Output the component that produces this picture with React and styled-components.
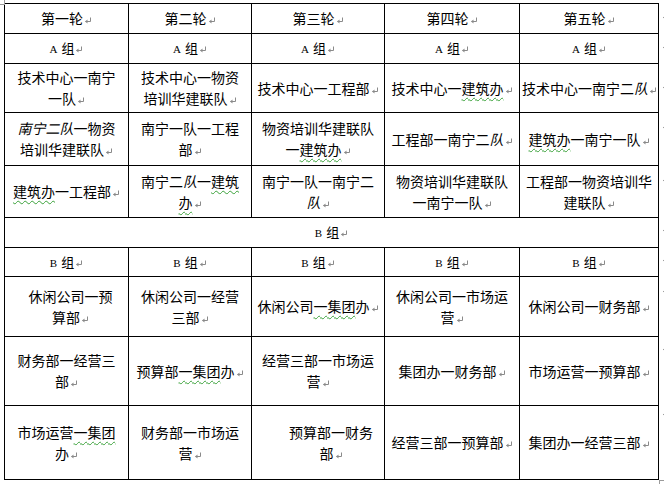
import React from "react";
import styled, { createGlobalStyle } from "styled-components";

const Global = createGlobalStyle`
  html, body { margin: 0; padding: 0; background: #fff; overflow: hidden; }
  body { font-family: "Noto Sans CJK SC", "Noto Sans", sans-serif; color: #000; }
`;

const Page = styled.div`
  position: relative;
  width: 664px;
  height: 484px;
  padding: 3px 0 0 4px;
  box-sizing: border-box;
`;

const Table = styled.table`
  border-collapse: collapse;
  table-layout: fixed;
  width: 660px;
`;

const Row = styled.tr`
  height: ${(p) => p.$h}px;
`;

const Cell = styled.td`
  border: 1px solid #000;
  padding: 0 2px 0 ${(p) => 2 + (p.$shift || 0)}px;
  text-align: center;
  vertical-align: middle;
  font-size: ${(p) => (p.$small ? 13 : 14)}px;
  line-height: ${(p) => (p.$small ? 18 : 21)}px;
  white-space: nowrap;
  overflow: hidden;
`;

const EdgeCell = styled.td`
  border: none;
  padding: ${(p) => p.$top}px 0 0 2px;
  vertical-align: top;
  line-height: 0;
`;

const Line = styled.div``;

const Latin = styled.span`
  font-family: "Liberation Serif", "DejaVu Serif", serif;
  font-size: 11px;
  margin-right: 4px;
`;

const Slant = styled.span`
  font-style: italic;
`;

const Wavy = styled.span`
  text-decoration: underline wavy #3aa13a;
  text-decoration-thickness: 1px;
  text-underline-offset: 3px;
`;

const MarkSvg = styled.svg`
  display: inline-block;
  width: 8px;
  height: 8px;
  margin-left: 1px;
  vertical-align: -1px;
`;

const Corner = styled.div`
  position: absolute;
  width: 4px;
  height: 4px;
  border-color: #9a9a9a;
  border-style: solid;
  border-width: 0;
  ${(p) => p.$pos}
`;

function Mark() {
  return (
    <MarkSvg viewBox="0 0 8 8">
      <path d="M6.5 0.5 V4.5 H1.5" stroke="#8a8a8a" strokeWidth="1" fill="none" />
      <path d="M1 4.5 L3.5 2.5 V6.5 Z" fill="#8a8a8a" />
    </MarkSvg>
  );
}

// parse *italic* and ~wavy~ markup
function renderText(s) {
  const out = [];
  const re = /(\*[^*]+\*|~[^~]+~)/g;
  let last = 0;
  let m;
  let k = 0;
  while ((m = re.exec(s))) {
    if (m.index > last) out.push(s.slice(last, m.index));
    const inner = m[0].slice(1, -1);
    if (m[0][0] === "*") out.push(<Slant key={k++}>{inner}</Slant>);
    else out.push(<Wavy key={k++}>{inner}</Wavy>);
    last = m.index + m[0].length;
  }
  if (last < s.length) out.push(s.slice(last));
  return out;
}

function Content({ lines }) {
  return lines.map((l, i) => (
    <Line key={i}>
      {renderText(l)}
      {i === lines.length - 1 && <Mark />}
    </Line>
  ));
}

function Group({ letter }) {
  return (
    <Line>
      <Latin>{letter}</Latin>组<Mark />
    </Line>
  );
}

const cols = [124, 123, 133, 135, 139];

const rows = [
  { h: 30, top: 9, cells: [["第一轮"], ["第二轮"], ["第三轮"], ["第四轮"], ["第五轮"]] },
  { h: 30, group: "A", top: 9 },
  {
    h: 49,
    top: 19,
    cells: [
      ["技术中心一南宁", "一队"],
      ["技术中心一物资", "培训华建联队"],
      ["技术中心一工程部"],
      ["技术中心一~建筑办~"],
      ["技术中心一南宁二*队*"],
    ],
  },
  {
    h: 53,
    top: 10,
    cells: [
      ["*南宁二队*一物资", "培训华建联队"],
      ["南宁一队一工程", "部"],
      ["物资培训华建联队", "一~建筑办~"],
      ["工程部一南宁二*队*"],
      ["~建筑办~一南宁一队"],
    ],
  },
  {
    h: 52,
    top: 10,
    cells: [
      ["~建筑办~一工程部"],
      ["南宁二*队*一~建筑~", "~办~"],
      ["南宁一队一南宁二", "*队*"],
      ["物资培训华建联队", "一南宁一队"],
      ["工程部一物资培训华", "建联队"],
    ],
  },
  { h: 30, span: "B", top: 8 },
  { h: 29, group: "B", top: 8 },
  {
    h: 60,
    top: 10,
    cells: [
      ["休闲公司一预", "算部"],
      ["休闲公司一经营", "三部"],
      ["休闲公司~一集团~办"],
      ["休闲公司一市场运", "营"],
      ["休闲公司一财务部"],
    ],
    shifts: [8, 0, 0, 0, 0],
  },
  {
    h: 69,
    top: 8,
    cells: [
      ["财务部一经营三", "部"],
      ["预算部~一集团~办"],
      ["经营三部一市场运", "营"],
      ["集团办一财务部"],
      ["市场运营一预算部"],
    ],
  },
  {
    h: 74,
    top: 4,
    cells: [
      ["市场运营~一集团~", "办"],
      ["财务部一市场运", "营"],
      ["预算部一财务", "部"],
      ["经营三部一预算部"],
      ["集团办一经营三部"],
    ],
    shifts: [0, 0, 26, 0, 0],
  },
];

export default function App() {
  return (
    <>
      <Global />
      <Page>
        <Corner $pos="left: 0; top: 0; border-right-width: 1px; border-bottom-width: 1px;" />
        <Table>
          <colgroup>
            {cols.map((w, i) => (
              <col key={i} style={{ width: w }} />
            ))}
            <col style={{ width: 6 }} />
          </colgroup>
          <tbody>
            {rows.map((r, ri) => (
              <Row key={ri} $h={r.h}>
                {r.span ? (
                  <Cell colSpan={5} $small>
                    <Group letter={r.span} />
                  </Cell>
                ) : r.group ? (
                  cols.map((_, ci) => (
                    <Cell key={ci} $small>
                      <Group letter={r.group} />
                    </Cell>
                  ))
                ) : (
                  r.cells.map((c, ci) => (
                    <Cell key={ci} $shift={r.shifts ? r.shifts[ci] : 0}>
                      <Content lines={c} />
                    </Cell>
                  ))
                )}
                <EdgeCell $top={r.top}>
                  <Mark />
                </EdgeCell>
              </Row>
            ))}
          </tbody>
        </Table>
        <Corner $pos="left: 659px; top: 480px; border-left-width: 1px; border-top-width: 1px;" />
      </Page>
    </>
  );
}
